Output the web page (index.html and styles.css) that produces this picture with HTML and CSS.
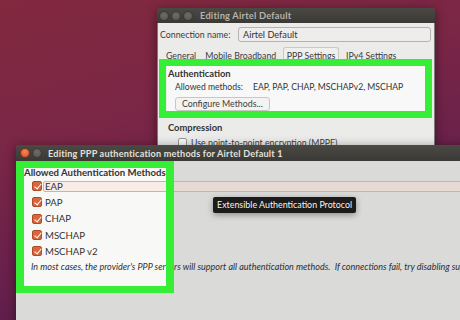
FILE: index.html
```html
<!DOCTYPE html>
<html>
<head>
<meta charset="utf-8">
<link rel="stylesheet" href="styles.css">
</head>
<body>
<div class="desktop">

  <div class="win win-back">
    <div class="titlebar">
      <div class="btns">
        <span class="wbtn"></span><span class="wbtn"></span><span class="wbtn"></span>
      </div>
      <div class="title">Editing Airtel Default</div>
    </div>
    <div class="wbody">
      <div class="conn-row">
        <span class="lbl">Connection name:</span>
        <span class="input">Airtel Default</span>
      </div>
      <div class="tabs">
        <span class="tab">General</span>
        <span class="tab">Mobile Broadband</span>
        <span class="tab active">PPP Settings</span>
        <span class="tab">IPv4 Settings</span>
      </div>
      <div class="panel">
        <div class="auth">
          <div class="h">Authentication</div>
          <div class="methods"><span class="mlbl">Allowed methods:</span><span>EAP, PAP, CHAP, MSCHAPv2, MSCHAP</span></div>
          <div class="btn-row"><span class="button">Configure Methods...</span></div>
        </div>
        <div class="h comp">Compression</div>
        <div class="chk-row"><span class="empty-box"></span><span>Use point-to-point encryption (MPPE)</span></div>
      </div>
    </div>
    <div class="ring ring-top"></div>
  </div>

  <div class="win win-front">
    <div class="titlebar front-tb">
      <div class="btns">
        <span class="wbtn close"></span><span class="wbtn"></span>
      </div>
      <div class="title">Editing PPP authentication methods for Airtel Default 1</div>
    </div>
    <div class="wbody fbody">
      <div class="spot"></div>
      <div class="fcontent">
        <div class="h">Allowed Authentication Methods</div>
        <ul class="list">
          <li class="sel"><span class="cb"></span><span class="txt">EAP</span></li>
          <li><span class="cb"></span><span class="txt">PAP</span></li>
          <li><span class="cb"></span><span class="txt">CHAP</span></li>
          <li><span class="cb"></span><span class="txt">MSCHAP</span></li>
          <li><span class="cb"></span><span class="txt">MSCHAP v2</span></li>
        </ul>
        <div class="note">In most cases, the provider's PPP servers will support all authentication methods.&nbsp; If connections fail, try disabling support for some methods.</div>
      </div>
      <div class="ring ring-front"></div>
      <div class="tooltip">Extensible Authentication Protocol</div>
    </div>
  </div>

</div>
</body>
</html>
```
FILE: styles.css
```css
* { box-sizing: border-box; }
html, body { margin: 0; padding: 0; }
body {
  width: 460px;
  height: 320px;
  overflow: hidden;
  font-family: Lato, "Open Sans", sans-serif;
  font-size: 9.6px;
  color: #3c3c3c;
  white-space: nowrap;
}
.desktop {
  position: relative;
  width: 460px;
  height: 320px;
  overflow: hidden;
  background: linear-gradient(165deg, #82293f 0%, #7a2646 35%, #66204c 65%, #4a1548 100%);
}
.win {
  position: absolute;
  display: flex;
  flex-direction: column;
  box-shadow: 0 2px 10px rgba(0,0,0,0.45);
}
.win-back {
  left: 157px;
  top: 8px;
  width: 278px;
  height: 160px;
  font-size: 8.8px;
}
.titlebar {
  height: 15px;
  background: linear-gradient(#4a4944, #3a3935);
  border-radius: 4px 4px 0 0;
  display: flex;
  align-items: center;
  padding-left: 2px;
  color: #b5b3ae;
  font-weight: 700;
  flex: none;
  font-size: 9.3px;
}
.btns { display: flex; gap: 2px; width: 41px; flex: none; }
.wbtn {
  width: 10px;
  height: 10px;
  border-radius: 50%;
  background: radial-gradient(circle at 50% 40%, #6d6c68, #55544f);
  border: 1px solid #3a3935;
}
.title { letter-spacing: 0.2px; }
.wbody {
  flex: 1;
  background: #ebebea;
  border: 1px solid #7c7b77;
  border-top: none;
  padding: 4px 3px 0 2px;
}
.conn-row { display: flex; align-items: center; height: 15px; }
.lbl { width: 78px; flex: none; }
.input {
  flex: 1;
  height: 15px;
  border: 1px solid #b4b3b0;
  border-radius: 3px;
  background: #eeedec;
  padding-left: 4px;
  line-height: 13px;
  color: #333;
  font-size: 9.2px;
}
.tabs {
  display: flex;
  align-items: flex-end;
  height: 15px;
  margin-top: 5px;
  padding-left: 6px;
}
.tab { padding: 0 4.5px; line-height: 13px; }
.tab:first-child { padding-left: 0; }
.tab.active {
  border: 1px solid #c9c8c5;
  border-bottom: none;
  border-radius: 3px 3px 0 0;
  background: #efefee;
  padding: 1px 3px 0;
  height: 15px;
  margin: 0 2px;
}
.panel { padding-left: 8px; }
.auth { background: #f8f8f8; margin: 0 3px 0 -1px; padding: 6px 0 0 1px; height: 50px; }
.h { font-weight: 700; color: #333; line-height: 12px; font-size: 9.4px; }
.methods { padding-left: 7px; margin-top: 1px; line-height: 13px; font-size: 8.6px; color: #333; }
.mlbl { margin-right: 10px; }
.btn-row { padding-left: 7px; margin-top: 3px; }
.button {
  display: inline-block;
  height: 14px;
  line-height: 12px;
  border: 1px solid #c8c7c4;
  border-radius: 3px;
  background: #f3f3f2;
  padding: 0 6px;
}
.comp { margin-top: 10px; }
.chk-row { display: flex; align-items: center; gap: 4px; padding-left: 10px; margin-top: 3px; }
.empty-box { width: 9px; height: 9px; border: 1px solid #9b9a97; border-radius: 2px; background: #fafafa; flex: none; }

.ring {
  position: absolute;
  border: 7px solid #36ee36;
  pointer-events: none;
}
.ring-top { left: 2px; top: 51px; width: 273px; height: 59px; }

.win-front {
  left: 16px;
  top: 145px;
  width: 460px;
  height: 190px;
}
.front-tb { height: 16px; padding-left: 4px; color: #e4e1da; border-radius: 4px 0 0 0; font-size: 9.1px; }
.front-tb .btns { width: 28px; }
.wbtn.close { background: radial-gradient(circle at 50% 35%, #f28a5f, #d9491e); border-color: #8a3217; }
.fbody {
  position: relative;
  background: #dadad9;
  border: none;
  padding: 0;
}
.spot { position: absolute; left: 8px; top: 7px; width: 142px; height: 118px; background: #f8f8f7; }
.fcontent { position: relative; padding: 6px 0 0 8px; }
.fcontent .h { font-size: 9.6px; }
.list { list-style: none; margin: -1px 0 0; padding: 0 0 0 8px; }
.list li { display: flex; align-items: center; height: 16.3px; gap: 3px; color: #333; }
.list li.sel { position: relative; }
.list li.sel::after {
  content: "";
  position: absolute;
  left: 11px;
  right: -20px;
  top: 3px;
  bottom: 2px;
  border: 1px solid #e2aa9b;
  border-radius: 2px;
  background: rgba(250, 215, 205, 0.4);
}
.list li .txt { position: relative; z-index: 1; }
.cb {
  width: 10px;
  height: 10px;
  border-radius: 2px;
  background: #d8663e;
  border: 1px solid #b04a27;
  position: relative;
  flex: none;
}
.cb::after {
  content: "";
  position: absolute;
  left: 2.5px;
  top: 0px;
  width: 3px;
  height: 6px;
  border: solid #fff;
  border-width: 0 1.5px 1.5px 0;
  transform: rotate(40deg);
}
.note {
  font-style: italic;
  margin-top: 1px;
  padding-left: 7px;
  font-size: 9px;
  color: #2e2e2e;
  line-height: 14px;
}
.ring-front { left: 0; top: 0; width: 158px; height: 132px; border-width: 7px 8px 7px 8px; }
.tooltip {
  position: absolute;
  left: 197px;
  top: 36px;
  height: 16px;
  background: #1b1b1b;
  color: #f4f4f4;
  line-height: 16px;
  padding: 0 4px;
  border-radius: 2px;
  font-size: 8.9px;
  box-shadow: 0 2px 6px rgba(0,0,0,0.35);
}
```
